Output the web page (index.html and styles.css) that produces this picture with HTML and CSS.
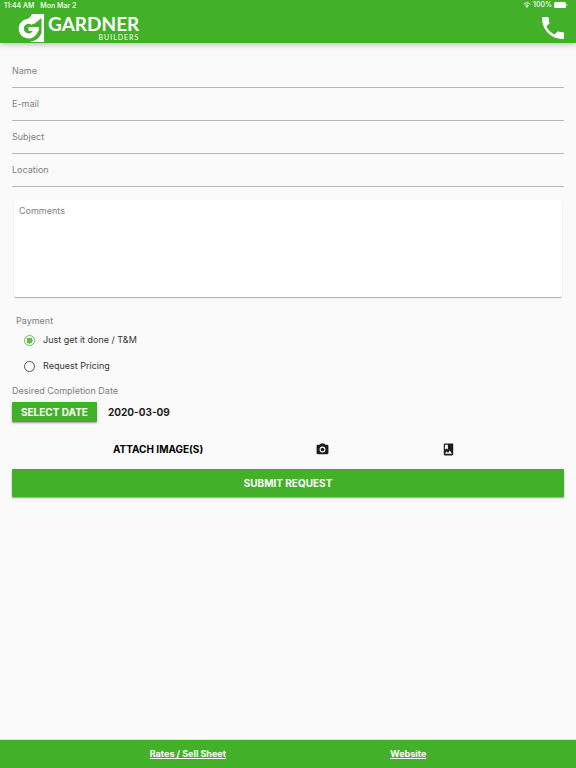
FILE: index.html
```html
<!DOCTYPE html>
<html lang="en">
<head>
<meta charset="utf-8">
<meta name="viewport" content="width=device-width, initial-scale=1">
<title>Gardner Builders</title>
<link rel="stylesheet" href="styles.css">
</head>
<body>
<header class="header">
  <div class="status">
    <span>11:44 AM</span>
    <span>Mon Mar 2</span>
    <span class="status-right">
      <svg width="8" height="6" viewBox="0 0 16 12" aria-hidden="true"><path d="M1.5 4.5a9.5 9.5 0 0 1 13 0M4 7.5a6 6 0 0 1 8 0" fill="none" stroke="#fff" stroke-width="2"/><path d="M5.8 9.2a3.3 3.3 0 0 1 4.4 0L8 11.800z" fill="#fff"/></svg>
      <span>100%</span>
      <svg width="14" height="6" viewBox="0 0 14 6" aria-hidden="true"><rect width="12" height="6" rx="1.5" fill="#fff"/><path d="M13 2v2" stroke="#fff" stroke-opacity=".6"/></svg>
    </span>
  </div>
  <div class="bar">
    <div class="logo">
      <svg width="26" height="28" viewBox="0 0 26 28" aria-hidden="true">
        <path d="M14 0H26V28H12Q21 26 23.500 19V4L16 10L8 5.500Q12 4.500 14 0Z" fill="#fff"/>
        <path d="M15.500 9.200A7.300 7.300 0 1 0 17.800 15.500" fill="none" stroke="#fff" stroke-width="5"/>
        <path d="M10.500 13H21V17H10.500Z" fill="#fff"/>
      </svg>
      <div class="logo-text">
        <span class="logo-name">GARDNER</span>
        <span class="logo-sub">BUILDERS</span>
      </div>
    </div>
    <button class="call" type="button" aria-label="Call"><svg width="22" height="22" viewBox="3 3 18 18" aria-hidden="true"><path fill="#fff" d="M6.620 10.790c1.440 2.830 3.760 5.140 6.590 6.590l2.200-2.200c.27-.27.67-.36 1.020-.24 1.120.37 2.330.57 3.570.57.550 0 1 .45 1 1V20c0 .55-.45 1-1 1-9.390 0-17-7.610-17-17 0-.55.45-1 1-1h3.500c.55 0 1 .45 1 1 0 1.250.2 2.450.57 3.570.11.35.03.74-.25 1.020l-2.200 2.200z"/></svg></button>
  </div>
</header>
<main class="main">
  <form class="form">
    <input class="field" type="text" placeholder="Name" aria-label="Name">
    <input class="field" type="email" placeholder="E-mail" aria-label="E-mail">
    <input class="field" type="text" placeholder="Subject" aria-label="Subject">
    <input class="field" type="text" placeholder="Location" aria-label="Location">
    <textarea class="comments" placeholder="Comments" aria-label="Comments"></textarea>
    <fieldset class="payment">
      <legend>Payment</legend>
      <label class="option"><input type="radio" name="payment" checked>Just get it done / T&amp;M</label>
      <label class="option"><input type="radio" name="payment">Request Pricing</label>
    </fieldset>
    <div class="date-title">Desired Completion Date</div>
    <div class="date">
      <button class="btn" type="button">SELECT DATE</button>
      <span>2020-03-09</span>
    </div>
    <div class="attach">
      <span>ATTACH IMAGE(S)</span>
      <button type="button" aria-label="Take photo"><svg width="13" height="13" viewBox="1 1 22 22" aria-hidden="true"><path fill="#1c1c1c" fill-rule="evenodd" d="M9 2 7.170 4H4c-1.100 0-2 .9-2 2v12c0 1.100.9 2 2 2h16c1.100 0 2-.9 2-2V6c0-1.100-.9-2-2-2h-3.170L15 2H9zm3 15a5 5 0 1 1 0-10 5 5 0 0 1 0 10z"/><circle cx="12" cy="12" r="3" fill="#1c1c1c"/></svg></button>
      <button type="button" aria-label="Choose from album"><svg width="13" height="13" viewBox="1 1 22 22" aria-hidden="true"><path fill="#1c1c1c" fill-rule="evenodd" d="M18 2H6c-1.100 0-2 .9-2 2v16c0 1.100.9 2 2 2h12c1.100 0 2-.9 2-2V4c0-1.100-.9-2-2-2zM6 4h5v8l-2.500-1.500L6 12V4zm0 15 3-3.860 2.140 2.580 3-3.860L18 19H6z"/></svg></button>
    </div>
    <button class="btn submit" type="submit">SUBMIT REQUEST</button>
  </form>
</main>
<footer class="footer">
  <a href="#rates">Rates / Sell Sheet</a>
  <a href="#website">Website</a>
</footer>
</body>
</html>
```
FILE: styles.css
```css
* { box-sizing: border-box; }
body {
  margin: 0;
  min-height: 100vh;
  display: flex;
  flex-direction: column;
  background: #fafafa;
  color: #222;
  font: 9px/12px Inter, "Liberation Sans", sans-serif;
}
button { border: 0; padding: 0; background: none; font: inherit; color: inherit; cursor: pointer; }
svg { display: block; }
.header { background: #43b02a; color: #fff; box-shadow: 0 1px 6px rgba(0, 0, 0, .3); }
.status { display: flex; gap: 6px; padding: 0 8px 0 4px; font-size: 7px; font-weight: 500; }
.status-right { display: flex; align-items: center; gap: 2px; height: 10px; margin-left: auto; }
.bar { display: flex; align-items: center; justify-content: space-between; height: 31px; padding: 0 12px 0 18px; }
.logo { display: flex; align-items: center; gap: 4px; }
.logo-text { display: flex; flex-direction: column; align-items: flex-end; font-family: Lato, sans-serif; }
.logo-name { font-size: 19px; line-height: 19px; font-weight: 700; }
.logo-sub { font-size: 7px; line-height: 8px; letter-spacing: 1px; }
.main { flex: 1; padding: 12px; }
.form { display: flex; flex-direction: column; }
.field {
  width: 100%;
  height: 33px;
  padding: 0 0 1px;
  border: 0;
  border-bottom: 1px solid #b8b8b8;
  border-radius: 0;
  background: none;
  color: inherit;
  font: inherit;
}
::placeholder { color: #808080; opacity: 1; }
.comments {
  height: 97px;
  margin: 13px 2px 0;
  padding: 5px;
  border: 0;
  border-radius: 2px;
  background: #fff;
  box-shadow: 0 1px 1px rgba(0, 0, 0, .3);
  font: inherit;
  resize: none;
}
.payment { margin: 18px 0 0; padding: 0 4px; border: 0; color: #808080; }
.payment legend { padding: 0; }
.option { display: flex; align-items: center; gap: 8px; height: 26px; padding-left: 8px; color: #333; }
.option input {
  appearance: none;
  width: 11px;
  height: 11px;
  margin: 0;
  border: 1px solid #555;
  border-radius: 50%;
}
.option input:checked { border-color: #62bf4d; background: radial-gradient(circle, #62bf4d 0 3px, transparent 3px); }
.date-title { margin-top: 6px; color: #808080; }
.date { display: flex; align-items: center; gap: 11px; margin-top: 5px; font-size: 10px; font-weight: 700; }
.btn {
  height: 20px;
  padding: 0 9px;
  border-radius: 1px;
  background: #43b02a;
  color: #fff;
  font-size: 10px;
  font-weight: 700;
  box-shadow: 0 1px 2px rgba(0, 0, 0, .4);
}
.attach {
  display: flex;
  align-items: center;
  justify-content: space-between;
  height: 40px;
  margin-top: 7px;
  padding: 0 109px 0 101px;
  color: #000;
  font-size: 10px;
  font-weight: 700;
}
.submit { height: 28px; }
.footer {
  display: flex;
  align-items: center;
  justify-content: space-between;
  height: 28px;
  padding: 0 26%;
  background: #43b02a;
  color: #fff;
  font-weight: 700;
  box-shadow: 0 0 1px rgba(0, 0, 0, .5);
}
.footer a { color: inherit; }
```
